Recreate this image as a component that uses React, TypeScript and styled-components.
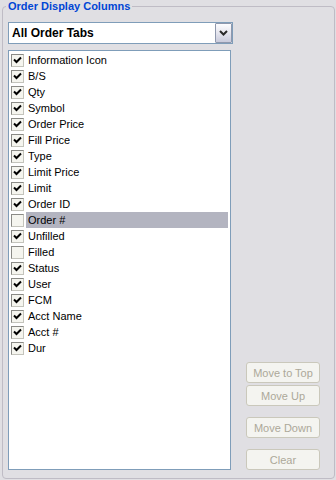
import React, { useState } from "react";
import styled, { createGlobalStyle } from "styled-components";

const GlobalStyle = createGlobalStyle`
  html, body {
    margin: 0;
    padding: 0;
    background: #e0dfe3;
    font-family: "Liberation Sans", Arial, sans-serif;
    font-size: 11px;
  }
`;

const Page = styled.div`
  width: 336px;
  height: 480px;
  padding: 0 2px 0 2px;
  box-sizing: border-box;
`;

const Group = styled.fieldset`
  margin: 0;
  padding: 0 0 8px 5px;
  border: 1px solid #bfbcc5;
  border-radius: 4px;
  min-inline-size: 0;
  width: 333px;
  box-sizing: border-box;
`;

const Legend = styled.legend`
  margin-left: -2px;
  padding: 0 2px;
  color: #0046d5;
  font-weight: bold;
  font-size: 11px;
  line-height: 13px;
`;

const Body = styled.div`
  display: flex;
  align-items: flex-end;
  margin-top: 9px;
`;

const LeftColumn = styled.div`
  display: flex;
  flex-direction: column;
  width: 225px;
  gap: 6px;
`;

const Combo = styled.div`
  display: flex;
  align-items: stretch;
  height: 22px;
  box-sizing: border-box;
  border: 1px solid #7f9db9;
  background: #fff;
  padding: 0 0 0 3px;
`;

const ComboText = styled.div`
  flex: 1;
  display: flex;
  align-items: center;
  font-weight: bold;
  font-size: 12px;
  color: #000;
`;

const ComboButton = styled.div`
  width: 17px;
  box-sizing: border-box;
  border: 1px solid #8f98ad;
  border-radius: 1px;
  background: linear-gradient(#fdfdff, #e8e8f0 45%, #c9cbdc);
  display: flex;
  align-items: center;
  justify-content: center;
`;

const List = styled.div`
  width: 223px;
  height: 420px;
  box-sizing: border-box;
  border: 1px solid #7f9db9;
  background: #fff;
  padding: 1px 1px 0 2px;
`;

const Row = styled.div`
  display: flex;
  align-items: center;
  height: 16px;
`;

const Box = styled.div`
  width: 13px;
  height: 13px;
  box-sizing: border-box;
  border: 1px solid;
  border-color: #8a8a86 #c4c4bc #c4c4bc #8a8a86;
  background: #f5f5ef;
  display: flex;
  align-items: center;
  justify-content: center;
`;

const Label = styled.div<{ $selected: boolean }>`
  flex: 1;
  margin-left: 2px;
  margin-right: 1px;
  height: 16px;
  line-height: 16px;
  padding-left: 2px;
  color: #000;
  background: ${(p) => (p.$selected ? "#b3b4c0" : "transparent")};
`;

const ButtonColumn = styled.div`
  display: flex;
  flex-direction: column;
  margin-left: 13px;
`;

const SideButton = styled.button<{ $gap: number }>`
  width: 74px;
  height: 21px;
  margin-top: ${(p) => p.$gap}px;
  padding: 0;
  box-sizing: border-box;
  border: 1px solid #cac8bb;
  border-radius: 3px;
  background: #f4f4f0;
  color: #aca899;
  font-family: "Liberation Sans", Arial, sans-serif;
  font-size: 11px;
`;

const columns: [string, boolean][] = [
  ["Information Icon", true],
  ["B/S", true],
  ["Qty", true],
  ["Symbol", true],
  ["Order Price", true],
  ["Fill Price", true],
  ["Type", true],
  ["Limit Price", true],
  ["Limit", true],
  ["Order ID", true],
  ["Order #", false],
  ["Unfilled", true],
  ["Filled", false],
  ["Status", true],
  ["User", true],
  ["FCM", true],
  ["Acct Name", true],
  ["Acct #", true],
  ["Dur", true],
];

function Check() {
  return (
    <svg width="9" height="9" viewBox="0 0 9 9">
      <path d="M1 3.5 L3.5 6 L8 1.5" fill="none" stroke="#000" strokeWidth="2" />
    </svg>
  );
}

export default function App() {
  const [selected] = useState("Order #");

  return (
    <Page>
      <GlobalStyle />
      <Group>
        <Legend>Order Display Columns</Legend>
        <Body>
          <LeftColumn>
            <Combo>
              <ComboText>All Order Tabs</ComboText>
              <ComboButton>
                <svg width="9" height="6" viewBox="0 0 9 6">
                  <path d="M1 1 L4.5 4.5 L8 1" fill="none" stroke="#2a2a2a" strokeWidth="2" />
                </svg>
              </ComboButton>
            </Combo>
            <List>
              {columns.map(([name, on]) => (
                <Row key={name}>
                  <Box>{on && <Check />}</Box>
                  <Label $selected={name === selected}>{name}</Label>
                </Row>
              ))}
            </List>
          </LeftColumn>
          <ButtonColumn>
            <SideButton $gap={0} disabled>Move to Top</SideButton>
            <SideButton $gap={2} disabled>Move Up</SideButton>
            <SideButton $gap={11} disabled>Move Down</SideButton>
            <SideButton $gap={11} disabled>Clear</SideButton>
          </ButtonColumn>
        </Body>
      </Group>
    </Page>
  );
}
